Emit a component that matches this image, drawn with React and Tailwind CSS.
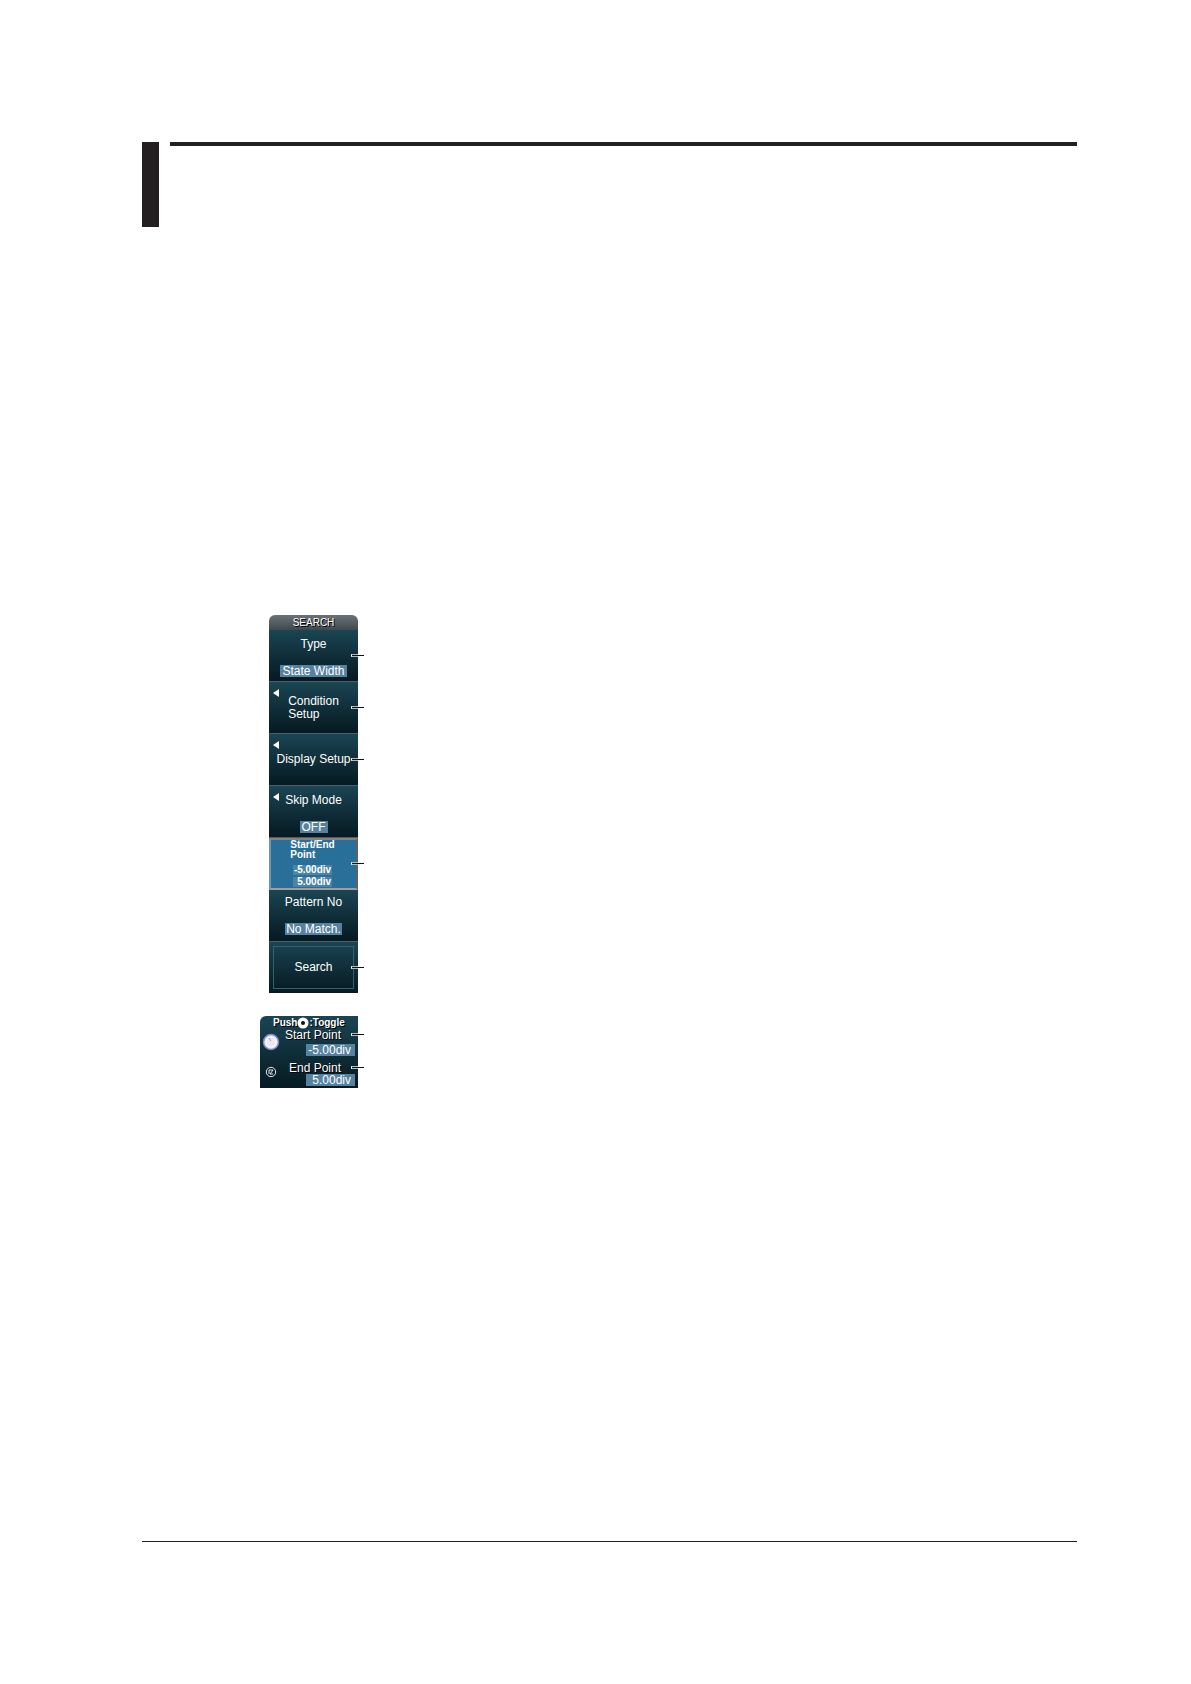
const text = "font-[Liberation_Sans,Arial,sans-serif] text-white [text-shadow:1px_1px_0_#000]";
const field = "rounded-none bg-[#57829f] text-xs leading-3 whitespace-nowrap";

function Arrow() {
  return (
    <svg viewBox="0 0 6 8" className="absolute left-1 top-[7px] h-2 w-1.5" aria-hidden="true">
      <path d="M6 0v8L0 4z" fill="#fff" />
    </svg>
  );
}

function Leader({ top }) {
  return (
    <span className={`absolute -right-1.5 ${top} flex h-[3px] w-[13px] items-center`} aria-hidden="true">
      <span className="h-[3px] w-[7px] border-y border-l border-y-white/70 border-l-white bg-[#111]" />
      <span className="h-px flex-1 bg-[#111]" />
    </span>
  );
}

function Item({ children, className = "", leader = false }) {
  return (
    <div className="relative">
      <button
        type="button"
        className={`relative flex h-[52px] w-full flex-col items-center border-b border-[#4b5f68] bg-linear-to-b from-[#1b4553] to-[#061a22] text-xs leading-[13px] ${className}`}
      >
        {children}
      </button>
      {leader && <Leader top="top-6" />}
    </div>
  );
}

function Menu() {
  return (
    <nav aria-label="Search" className={`w-[89px] ${text}`}>
      <h2 className="h-[15px] rounded-t-md bg-linear-to-b from-[#6c7378] to-[#41494e] text-center text-[10px] leading-[15px]">
        SEARCH
      </h2>
      <Item leader className="justify-between pt-2 pb-1">
        <span>Type</span>
        <span className={`${field} px-0.5`}>State Width</span>
      </Item>
      <Item leader className="justify-center">
        <Arrow />
        <span className="text-left">
          Condition
          <br />
          Setup
        </span>
      </Item>
      <Item leader className="justify-center">
        <Arrow />
        <span className="whitespace-nowrap">Display Setup</span>
      </Item>
      <Item className="justify-between pt-2 pb-1">
        <Arrow />
        <span>Skip Mode</span>
        <span className={`${field} px-0.5`}>OFF</span>
      </Item>
      <div className="relative">
        <button
          type="button"
          className="flex h-[52px] w-full flex-col items-center justify-between border-2 border-t-[#8a8080] border-r-[#5d6468] border-b-[#a89a98] border-l-[#6b96b4] bg-[#28709a] pr-0.5 pb-px text-[10px] leading-[10px] font-bold"
        >
          <span className="text-left">
            Start/End
            <br />
            Point
          </span>
          <span className="flex flex-col gap-0.5 text-right">
            <span className="bg-[#4d83a6] px-px">-5.00div</span>
            <span className="bg-[#4d83a6] px-px">5.00div</span>
          </span>
        </button>
        <Leader top="top-6" />
      </div>
      <Item className="justify-between pt-1.5 pb-1.5">
        <span>Pattern No</span>
        <span className={`${field} px-px`}>No Match.</span>
      </Item>
      <div className="relative">
        <button
          type="button"
          className="flex h-[51px] w-full bg-linear-to-b from-[#1b4553] to-[#061a22] p-1 text-xs"
        >
          <span className="flex h-full w-full items-center justify-center border border-[#34606c] pb-px">Search</span>
        </button>
        <Leader top="top-6" />
      </div>
    </nav>
  );
}

function KnobPanel() {
  return (
    <section
      aria-label="Knob settings"
      className={`relative flex h-[72px] w-[98px] rounded-tl-md bg-linear-to-b from-[#1b4553] to-[#061a22] ${text}`}
    >
      <div className="flex w-[22px] shrink-0 flex-col items-center justify-between pt-[17px] pb-2.5">
        <svg viewBox="0 0 18 18" className="h-[18px] w-[18px]" aria-hidden="true">
          <circle cx="9" cy="9" r="7.5" fill="#e9e9f6" stroke="#8585cc" strokeWidth="1.5" />
          <circle cx="9" cy="9" r="5" fill="none" stroke="#fff" strokeWidth="1" />
          <path d="M9 8L7 5" stroke="#9c9cc0" strokeWidth="1" />
        </svg>
        <svg viewBox="0 0 12 12" className="h-3 w-3" aria-hidden="true">
          <circle cx="6" cy="6" r="4.7" fill="#10242c" stroke="#e4e8ea" strokeWidth="1" />
          <path d="M4 4h4M4 4v4M8 4L5 8h3" fill="none" stroke="#e4e8ea" strokeWidth="1" />
        </svg>
      </div>
      <div className="flex min-w-0 flex-1 flex-col items-end pt-px pr-[3px] text-xs leading-3">
        <p className="flex w-[82px] items-center text-[10px] leading-3 font-bold">
          Push
          <svg viewBox="0 0 12 12" className="h-3 w-3 shrink-0" aria-hidden="true">
            <circle cx="6" cy="6" r="5.5" fill="#fff" />
            <circle cx="6" cy="6" r="2" fill="#111" />
          </svg>
          :Toggle
        </p>
        <label htmlFor="start-point" className="mb-[3px] w-[70px]">Start Point</label>
        <input id="start-point" defaultValue="-5.00div" className={`${field} mb-1.5 h-3 w-[49px] pr-1 text-right`} />
        <label htmlFor="end-point" className="w-[66px]">End Point</label>
        <input id="end-point" defaultValue="5.00div" className={`${field} h-3 w-[49px] pr-1 text-right`} />
      </div>
      <Leader top="top-[17px]" />
      <Leader top="top-[50px]" />
    </section>
  );
}

export default function App() {
  return (
    <main className="flex min-h-screen flex-col bg-white pt-[142px] pr-[114px] pb-[142px] pl-[142px]">
      <header className="flex gap-[11px]">
        <div className="h-[85px] w-[17px] bg-[#231f20]" />
        <div className="h-1 flex-1 bg-[#231f20]" />
      </header>
      <div className="mt-[388px] ml-[118px] flex w-[98px] flex-1 flex-col items-end gap-[23px]">
        <Menu />
        <KnobPanel />
      </div>
      <footer className="h-px bg-[#231f20]" />
    </main>
  );
}
